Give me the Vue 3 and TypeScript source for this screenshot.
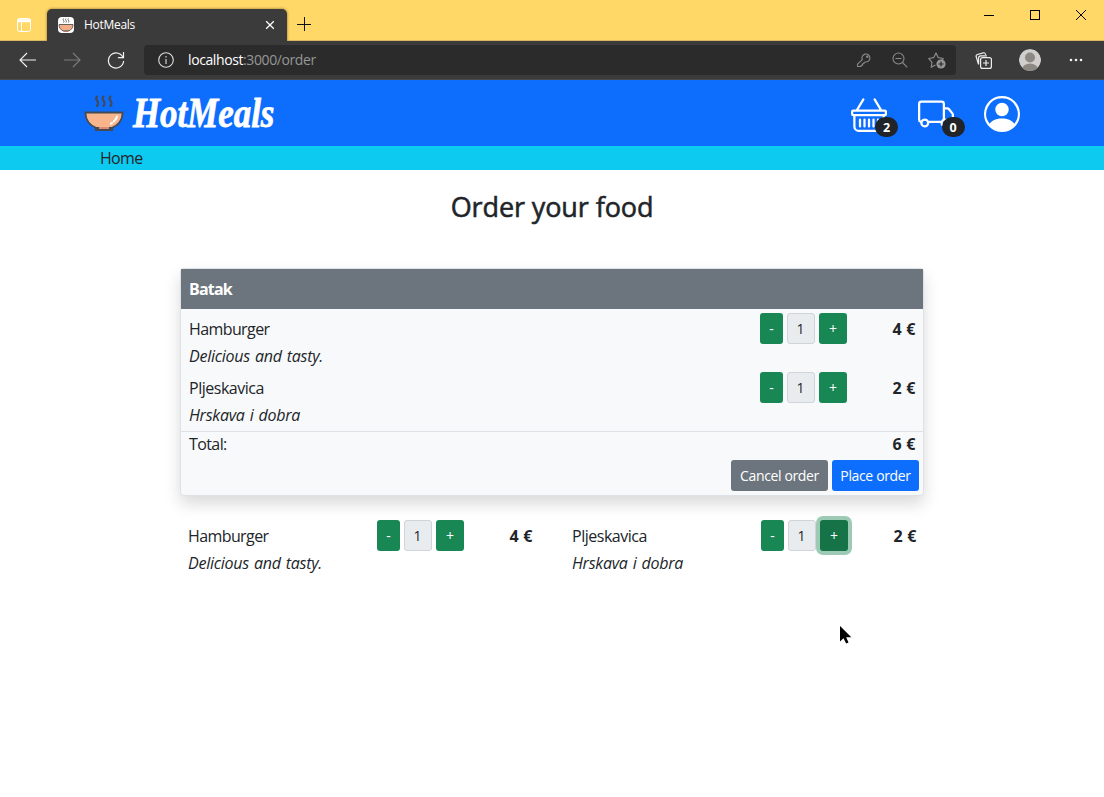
<script setup lang="ts">
interface Meal {
  name: string
  description: string
  quantity: number
  price: number
  focused?: boolean
}

const restaurant = 'Batak'
const meals: Meal[] = [
  { name: 'Hamburger', description: 'Delicious and tasty.', quantity: 1, price: 4 },
  { name: 'Pljeskavica', description: 'Hrskava i dobra', quantity: 1, price: 2, focused: true },
]
const total = meals.reduce((sum, meal) => sum + meal.quantity * meal.price, 0)
</script>

<template>
  <div class="window">
    <div class="tabstrip">
      <svg class="tab-actions" width="16" height="16" viewBox="0 0 16 16" fill="none" stroke="#fff">
        <rect x="1.5" y="1.5" width="13" height="13" rx="2" />
        <path d="M1.500 3h13M1.500 4.500h13" stroke-width="1.6" />
        <path d="M5.500 5v9.500" />
      </svg>
      <div class="tab">
        <svg class="favicon" width="16" height="16" viewBox="0 0 16 16">
          <rect width="16" height="16" rx="4" fill="#fff" />
          <path d="M5.500 1.500q-1 1 0 2t0 2M8 1.500q-1 1 0 2t0 2M10.500 1.500q-1 1 0 2t0 2" fill="none" stroke="#555" stroke-width=".9" />
          <path d="M1 7.500h14c0 3.500-2 5.500-4 6.300H5C3 13 1 11 1 7.500z" fill="#f4ad85" stroke="#555" stroke-width=".9" />
          <path d="M5.500 14.300h5" stroke="#a66b55" />
        </svg>
        <span class="tab-title">HotMeals</span>
        <svg class="tab-close" width="10" height="10" viewBox="0 0 10 10" stroke="#fff" stroke-width="1.3"><path d="M1.200 1.200l7.600 7.600M8.800 1.200L1.200 8.800" /></svg>
      </div>
      <svg class="new-tab" width="14" height="14" viewBox="0 0 14 14" stroke="#111"><path d="M7.500 0v14M0 7.500h14" /></svg>
      <div class="window-buttons">
        <svg width="10" height="10" viewBox="0 0 10 10" stroke="#000"><path d="M0 5.500h10" /></svg>
        <svg width="10" height="10" viewBox="0 0 10 10" stroke="#000" fill="none"><rect x=".5" y=".5" width="9" height="9" /></svg>
        <svg width="10" height="10" viewBox="0 0 10 10" stroke="#000"><path d="M0 0l10 10M10 0L0 10" /></svg>
      </div>
    </div>

    <div class="toolbar">
      <div class="nav">
        <svg width="18" height="16" viewBox="0 0 18 16" fill="none" stroke="#f2f2f2" stroke-width="1.1"><path d="M17 8H1.500M8 1L1 8l7 7" /></svg>
        <svg width="18" height="16" viewBox="0 0 18 16" fill="none" stroke="#7c7c7c" stroke-width="1.1"><path d="M1 8h15.500M10 1l7 7-7 7" /></svg>
        <svg width="18" height="18" viewBox="0 0 18 18" fill="none" stroke="#f2f2f2" stroke-width="1.2"><path d="M16.300 7.300A7.600 7.600 0 1 0 16.600 10M16.500 1v5.600h-5.600" /></svg>
      </div>
      <div class="address">
        <svg class="info" width="16" height="16" viewBox="0 0 16 16" fill="none" stroke="#dedede" stroke-width="1.1"><circle cx="8" cy="8" r="7.300" /><path d="M8 7v5M8 4v1.500" /></svg>
        <span class="url"><b>localhost</b>:3000/order</span>
        <div class="address-icons">
          <svg width="16" height="16" viewBox="0 0 16 16" fill="none" stroke="#8a8a8a" stroke-width="1.100"><path d="M6.300 7.700A4 4 0 1 1 9.500 10L8 10.500v1.300H6.500v1.400H5v1.300H1.500v-2.300z" stroke-linejoin="round" /><circle cx="11.300" cy="4.700" r=".7" /></svg>
          <svg width="16" height="16" viewBox="0 0 16 16" fill="none" stroke="#8a8a8a" stroke-width="1.100"><circle cx="6.500" cy="6.500" r="5.500" /><path d="M3.500 6.500h6M10.500 10.500l4.800 4.800" /></svg>
          <svg width="18" height="18" viewBox="0 0 18 18" fill="none" stroke="#8a8a8a" stroke-width="1.200"><path d="M7.500 14l-4.300 2.300.8-5L.8 7.500l4.800-.8L8 2l2.300 4.700 5 .8-1.500 1.500" stroke-linejoin="round" /><circle cx="13" cy="13" r="4.600" fill="#969696" stroke="none" /><path d="M13 10.400v5.200M10.400 13h5.200" stroke="#2b2b2b" /></svg>
        </div>
      </div>
      <svg class="collections" width="17" height="17" viewBox="0 0 17 17" fill="none" stroke="#eee" stroke-width="1.200"><path d="M3.400 12L1.200 4.800Q.7 3 2.400 2.500L8.400.8q1.600-.3 2 1.200l.3.900M3.600 12.500V6q0-2.200 2.200-2.200h6" /><rect x="5.600" y="5.600" width="10.800" height="10.800" rx="2" fill="#3b3b3b" /><path d="M11 8v6M8 11h6" /></svg>
      <svg class="profile" width="22" height="22" viewBox="0 0 22 22"><defs><clipPath id="face"><circle cx="11" cy="11" r="11" /></clipPath></defs><g clip-path="url(#face)"><circle cx="11" cy="11" r="11" fill="#d1cfcd" /><circle cx="11" cy="8.500" r="5" fill="#8d8884" /><ellipse cx="11" cy="20" rx="8" ry="5.400" fill="#8d8884" /></g></svg>
      <svg class="more" width="14" height="4" viewBox="0 0 14 4" fill="#f2f2f2"><circle cx="2" cy="2" r="1.300" /><circle cx="7" cy="2" r="1.300" /><circle cx="12" cy="2" r="1.300" /></svg>
    </div>

    <header class="navbar">
      <div class="brand">
        <svg width="40" height="38" viewBox="0 0 40 38" fill="none">
          <g stroke="#434a54" stroke-width="2.100" stroke-linecap="round"><path d="M13 2.500c-3 3 1.500 4 1 7q-.2 1.500-1 2.500M19.500 2.500c-3 3 1.500 4 1 7q-.2 1.500-1 2.500M26.500 2.500c-3 3 1.500 4 1 7q-.2 1.500-1 2.500" /></g>
          <path d="M11.700 36v-2.300h16.600V36z" fill="#ef9278" stroke="#434a54" stroke-width="1.800" />
          <path d="M1.300 18.500h37.400C38.300 27 33 32 27.500 34h-15C7 32 1.700 27 1.300 18.500z" fill="#f8b58c" stroke="#434a54" stroke-width="1.800" />
          <path d="M15 34h10" stroke="#ef9278" stroke-width="1.800" />
          <path d="M33 22.500c-.7 2.400-1.800 3.800-3.200 5M28 29l-1 .6" stroke="#fff" stroke-width="2.100" stroke-linecap="round" />
        </svg>
        <span class="brand-name">HotMeals</span>
      </div>
      <div class="shortcuts">
        <div class="shortcut">
          <svg width="36" height="36" viewBox="0 0 16 16" fill="#fff"><path d="M5.757 1.071a.5.5 0 0 1 .172.686L3.383 6h9.234L10.070 1.757a.5.5 0 1 1 .858-.514L13.783 6H15a1 1 0 0 1 1 1v1a1 1 0 0 1-1 1v4.500a2.500 2.500 0 0 1-2.500 2.500h-9A2.500 2.500 0 0 1 1 13.500V9a1 1 0 0 1-1-1V7a1 1 0 0 1 1-1h1.217L5.070 1.243a.5.5 0 0 1 .686-.172zM2 9v4.500A1.500 1.500 0 0 0 3.500 15h9a1.500 1.500 0 0 0 1.500-1.500V9H2zM1 7v1h14V7H1z" /><path d="M4 10.500v3M6 10.500v3M8 10.500v3M10 10.500v3M12 10.500v3" stroke="#fff" stroke-linecap="round" /></svg>
          <span class="badge">2</span>
        </div>
        <div class="shortcut">
          <svg width="36" height="36" viewBox="0 0 16 16" fill="#fff"><path d="M0 3.500A1.500 1.500 0 0 1 1.500 2h9A1.500 1.500 0 0 1 12 3.500V5h1.020a1.500 1.500 0 0 1 1.170.563l1.481 1.850a1.500 1.500 0 0 1 .329.938V10.500a1.500 1.500 0 0 1-1.500 1.500H14a2 2 0 1 1-4 0H5a2 2 0 1 1-3.998-.085A1.500 1.500 0 0 1 0 10.500v-7zm1.294 7.456A1.999 1.999 0 0 1 4.732 11h5.536a2.010 2.010 0 0 1 .732-.732V3.500a.5.5 0 0 0-.5-.5h-9a.5.5 0 0 0-.5.5v7a.5.5 0 0 0 .294.456zM12 10a2 2 0 0 1 1.732 1h.768a.5.5 0 0 0 .5-.5V8.350a.5.5 0 0 0-.110-.312l-1.480-1.850A.5.5 0 0 0 13.020 6H12v4zm-9 1a1 1 0 1 0 0 2 1 1 0 0 0 0-2zm9 0a1 1 0 1 0 0 2 1 1 0 0 0 0-2z" /></svg>
          <span class="badge">0</span>
        </div>
        <svg width="36" height="36" viewBox="0 0 16 16" fill="#fff"><path d="M11 6a3 3 0 1 1-6 0 3 3 0 0 1 6 0z" /><path fill-rule="evenodd" d="M0 8a8 8 0 1 1 16 0A8 8 0 0 1 0 8zm8-7a7 7 0 0 0-5.468 11.370C3.242 11.226 4.805 10 8 10s4.757 1.225 5.468 2.370A7 7 0 0 0 8 1z" /></svg>
      </div>
    </header>

    <nav class="breadcrumb"><a class="home">Home</a></nav>

    <main class="content">
      <h1>Order your food</h1>

      <section class="card">
        <div class="card-header">{{ restaurant }}</div>
        <div v-for="meal in meals" :key="meal.name" class="meal">
          <div class="meal-text">
            <div class="name">{{ meal.name }}</div>
            <div class="description">{{ meal.description }}</div>
          </div>
          <div class="stepper">
            <button class="step minus">-</button>
            <span class="quantity">{{ meal.quantity }}</span>
            <button class="step plus">+</button>
          </div>
          <div class="price">{{ meal.price }} €</div>
        </div>
        <div class="total"><span class="total-label">Total:</span><span class="price">{{ total }} €</span></div>
        <div class="actions">
          <button class="action cancel">Cancel order</button>
          <button class="action place">Place order</button>
        </div>
      </section>

      <section class="menu">
        <div v-for="meal in meals" :key="meal.name" class="meal">
          <div class="meal-text">
            <div class="name">{{ meal.name }}</div>
            <div class="description">{{ meal.description }}</div>
          </div>
          <div class="stepper">
            <button class="step minus">-</button>
            <span class="quantity">{{ meal.quantity }}</span>
            <button class="step plus" :class="{ focused: meal.focused }">+</button>
          </div>
          <div class="price">{{ meal.price }} €</div>
        </div>
      </section>
    </main>

    <svg class="pointer" width="13" height="19" viewBox="0 0 13 19"><path d="M0 0v15.500l3.500-3.300 2.700 5.300 2.300-1.100L6.200 11.200h5.100z" fill="#000" /></svg>
  </div>
</template>

<style>
body {
  margin: 0;
  background: #fff;
}
</style>

<style scoped>
.window {
  position: relative;
  width: 1104px;
  height: 797px;
  overflow: hidden;
  background: #fff;
  color: #212529;
  font: 16px/24px 'Open Sans', 'Noto Sans', sans-serif;
}
svg {
  display: block;
  flex: none;
}
.tabstrip {
  display: flex;
  box-sizing: border-box;
  height: 41px;
  background: #ffd868;
  border-bottom: 1px solid #d9b95f;
}
.tab-actions {
  margin: 17px 15px 0 16px;
}
.tab {
  display: flex;
  align-items: center;
  box-sizing: border-box;
  width: 240px;
  height: 32px;
  margin-top: 9px;
  padding: 0 12px 0 11px;
  border-radius: 5px 5px 0 0;
  background: #3b3b3b;
  box-shadow: 0 0 3px rgba(60, 45, 0, 0.6);
  clip-path: inset(-4px -4px 0 -4px);
}
.tab-title {
  flex: 1;
  margin-left: 10px;
  color: #fff;
  font-size: 12px;
  letter-spacing: -0.3px;
}
.new-tab {
  margin: 17px 0 0 10px;
}
.window-buttons {
  display: flex;
  gap: 36px;
  margin: 10px 18px 0 auto;
}
.toolbar {
  display: flex;
  align-items: center;
  box-sizing: border-box;
  height: 39px;
  background: #3b3b3b;
  border-bottom: 1px solid #4a4a4a;
}
.nav {
  display: flex;
  align-items: center;
  gap: 26px;
  margin: 0 19px;
}
.address {
  display: flex;
  align-items: center;
  box-sizing: border-box;
  width: 812px;
  height: 30px;
  padding: 0 10px 0 14px;
  border-radius: 4px;
  background: #2b2b2b;
}
.url {
  flex: 1;
  margin-left: 14px;
  color: #969696;
  font-size: 14px;
  letter-spacing: -0.4px;
}
.url b {
  color: #fff;
  font-weight: 400;
}
.address-icons {
  display: flex;
  align-items: center;
  gap: 20px;
}
.collections {
  margin-left: 19px;
}
.profile {
  margin-left: 27px;
}
.more {
  margin-left: 28px;
}
.navbar {
  display: flex;
  align-items: center;
  justify-content: space-between;
  height: 66px;
  padding: 0 84px;
  background: #0d6efd;
}
.brand {
  display: flex;
  align-items: center;
}
.brand-name {
  margin-left: 9px;
  color: #fff;
  font: italic 700 42px/40px 'Liberation Serif', serif;
  white-space: nowrap;
  transform: scaleX(0.83);
  transform-origin: left;
  -webkit-text-stroke: 0.8px #fff;
}
.shortcuts {
  display: flex;
  gap: 30.5px;
  padding-top: 2px;
}
.shortcut {
  position: relative;
}
.badge {
  position: absolute;
  top: 21px;
  left: 24px;
  width: 23px;
  height: 20px;
  border-radius: 10px;
  background: #212529;
  color: #fff;
  font-size: 12.5px;
  font-weight: 700;
  line-height: 21px;
  text-align: center;
}
.breadcrumb {
  height: 24px;
  padding-left: 100px;
  background: #0dcaf0;
}
.home {
  letter-spacing: -0.7px;
}
.content {
  width: 744px;
  margin: 0 auto;
}
h1 {
  margin: 0;
  padding: 20px 0 44px;
  font-size: 27px;
  font-weight: 400;
  line-height: 34px;
  text-align: center;
  letter-spacing: -0.1px;
  -webkit-text-stroke: 0.55px #212529;
}
.card {
  box-sizing: border-box;
  height: 228px;
  border: 1px solid #dee2e6;
  border-radius: 4px;
  background: #f8f9fa;
  box-shadow: 0 8px 16px rgba(0, 0, 0, 0.15);
}
.card-header {
  height: 40px;
  padding-left: 8px;
  background: #6c757d;
  color: #fff;
  font-weight: 700;
  line-height: 41px;
  letter-spacing: -0.8px;
}
.meal {
  display: grid;
  grid-template-columns: 1fr 87px 68px;
  box-sizing: border-box;
  height: 59px;
  padding: 4px 8px 0;
}
.name {
  margin-top: 4px;
  letter-spacing: -0.6px;
}
.meal:nth-last-child(1) .name,
.meal:nth-child(3) .name {
  letter-spacing: -0.48px;
}
.description {
  margin-top: 3px;
  font-style: italic;
  letter-spacing: -0.26px;
  word-spacing: 1.2px;
}
.stepper {
  display: flex;
  gap: 4px;
  height: 31px;
}
button {
  box-sizing: border-box;
  height: 31px;
  margin: 0;
  padding: 0;
  border: 0;
  border-radius: 3px;
  color: #fff;
  font: 14px/31px 'Open Sans', 'Noto Sans', sans-serif;
}
.step {
  background: #198754;
}
.minus {
  width: 23px;
}
.plus {
  width: 28px;
}
.focused {
  z-index: 1;
  background: #157347;
  box-shadow: 0 0 0 4px #9ccab4;
}
.quantity {
  box-sizing: border-box;
  width: 28px;
  padding-right: 1px;
  border: 1px solid #ced4da;
  border-radius: 3px;
  background: #e9ecef;
  font-size: 14px;
  line-height: 30px;
  text-align: center;
}
.price {
  margin-top: 4px;
  font-weight: 700;
  text-align: right;
  letter-spacing: -0.3px;
  word-spacing: 1px;
}
.total {
  display: flex;
  justify-content: space-between;
  height: 25px;
  margin-top: 4px;
  padding: 0 8px;
  border-top: 1px solid #dee2e6;
}
.total .price {
  margin-top: 0;
}
.total-label {
  letter-spacing: -0.6px;
}
.actions {
  display: flex;
  justify-content: flex-end;
  gap: 4px;
  margin-top: 3px;
  padding-right: 4px;
}
.action {
  letter-spacing: -0.36px;
}
.cancel {
  width: 97px;
  background: #6c757d;
}
.place {
  width: 87px;
  background: #0d6efd;
}
.menu {
  display: grid;
  grid-template-columns: 384px 384px;
  margin-top: 20px;
}
.menu .meal {
  padding-right: 32px;
}
.pointer {
  position: absolute;
  left: 840px;
  top: 626px;
}
</style>
